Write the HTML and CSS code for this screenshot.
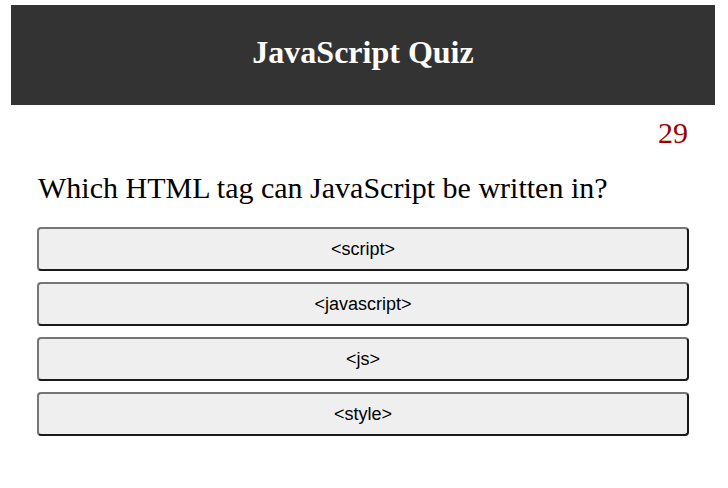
FILE: index.html
```html
<!DOCTYPE html>
<html lang="en">
<head>
<meta charset="utf-8">
<title>JavaScript Quiz</title>
<link rel="stylesheet" href="styles.css">
</head>
<body>
<header class="header">
  <h1 class="title">JavaScript Quiz</h1>
</header>
<main class="quiz">
  <div class="timer">29</div>
  <h2 class="question">Which HTML tag can JavaScript be written in?</h2>
  <div class="answers">
    <button class="answer">&lt;script&gt;</button>
    <button class="answer">&lt;javascript&gt;</button>
    <button class="answer">&lt;js&gt;</button>
    <button class="answer">&lt;style&gt;</button>
  </div>
</main>
</body>
</html>
```

FILE: styles.css
```css
html, body {
  margin: 0;
  padding: 0;
  background: #ffffff;
  font-family: "Liberation Serif", "Times New Roman", serif;
}

.header {
  margin: 5px 13px 0 11px;
  height: 100px;
  box-sizing: border-box;
  padding-top: 29px;
  background: #333333;
}

.title {
  margin: 0;
  text-align: center;
  color: #ffffff;
  font-family: "Liberation Serif", serif;
  font-weight: bold;
  font-size: 32px;
  line-height: 36px;
}

.quiz {
  margin: 0 39px 0 37px;
}

.timer {
  margin-top: 11px;
  padding-right: 1px;
  text-align: right;
  color: #9e0000;
  font-family: "Liberation Serif", serif;
  font-size: 30px;
  line-height: 34px;
}

.question {
  margin: 21px 0 0 1px;
  font-family: "Liberation Serif", serif;
  font-weight: normal;
  font-size: 30px;
  line-height: 34px;
  color: #000000;
}

.answers {
  margin-top: 22px;
  display: flex;
  flex-direction: column;
  gap: 11px;
}

.answer {
  display: block;
  width: 100%;
  height: 44px;
  margin: 0;
  padding: 0;
  box-sizing: border-box;
  border-width: 2px;
  border-style: solid;
  border-color: #767676 #1a1a1a #1a1a1a #767676;
  border-radius: 4px;
  background: #efefef;
  color: #000000;
  font-family: "Liberation Sans", Arial, sans-serif;
  font-size: 18px;
  text-align: center;
  cursor: pointer;
}
```
